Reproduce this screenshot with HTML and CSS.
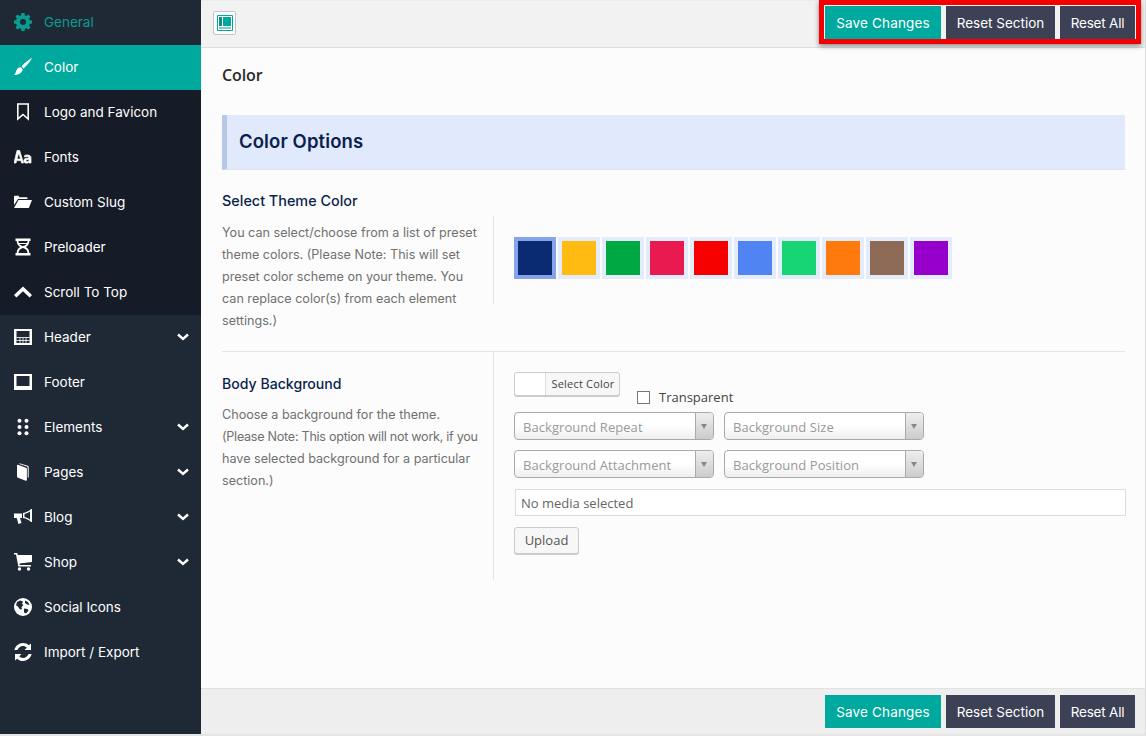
FILE: index.html
```html
<!DOCTYPE html>
<html lang="en">
<head>
    <meta charset="UTF-8">
    <title>Color</title>
    <link rel="stylesheet" href="styles.css">
</head>
<body>
    <div class="wrap">
        <nav class="sidebar">
            <a class="nav-item general"><svg class="ico" viewBox="0 0 18 18"><path fill-rule="evenodd" d="M7.5 0h3l.4 2.400 1.500.6 2-1.400 2.100 2.100-1.400 2 .6 1.500 2.300.4v3l-2.300.4-.6 1.500 1.400 2-2.100 2.100-2-1.400-1.500.6-.4 2.300h-3l-.4-2.300-1.500-.6-2 1.400-2.100-2.100 1.400-2-.6-1.500L0 10.500v-3l2.300-.4.6-1.500-1.400-2 2.100-2.100 2 1.400 1.500-.6zM9 6a3 3 0 1 0 0 6 3 3 0 0 0 0-6z"/></svg>General</a>
            <a class="nav-item active"><svg class="ico" viewBox="0 0 18 18"><path d="M18 0c-1 2.500-5 7.500-8.500 10.500L7.500 8.500C10.500 5 15.500 1 18 0zM6.800 9.300l1.900 1.900C8.400 14 5.500 17 0 17c1.800-1.300 1.600-3 2.500-5 .8-1.700 2.500-2.700 4.300-2.700z"/></svg>Color</a>
            <div class="nav-dark">
                <a class="nav-item"><svg class="ico" viewBox="0 0 18 18"><path fill="none" stroke="currentColor" stroke-width="1.600" d="M3.800 1h10.400v15L9 11.500 3.800 16z"/></svg>Logo and Favicon</a>
                <a class="nav-item"><svg class="ico" viewBox="0 0 18 18"><path stroke="currentColor" stroke-width=".7" d="M3 2.500h2.600L9.500 15H7.600l-.7-2.400H2.700L2 15H0zm-.1 8.500h3.700L4.800 5zM13 7c3 0 4 1 4 3.200V15h-2v-1c-.6.800-1.500 1.200-2.500 1.200-1.700 0-2.700-1-2.700-2.500 0-2 2-2.700 5-2.700 0-1-.5-1.500-1.700-1.500-.900 0-1.700.2-2.500.6V7.500C11.300 7.200 12 7 13 7zm2 4.400c-2 0-3 .3-3 1.200 0 .6.400 1 1.100 1 1 0 1.900-.6 1.900-1.300z"/></svg>Fonts</a>
                <a class="nav-item"><svg class="ico" viewBox="0 0 18 18"><path d="M0 4c0-.8.500-1.300 1.200-1.300h3.300l1 1.500h7c.7 0 1 .4 1 1V6H4L0 12zM4.500 7H18l-3.200 8H0z"/></svg>Custom Slug</a>
                <a class="nav-item"><svg class="ico" viewBox="0 0 18 18"><path fill-rule="evenodd" d="M1.500 .5h15v2.500h-1.200c0 3-1.500 5-3.500 6 2 1 3.500 3 3.500 6h1.200v2.500h-15V15h1.200c0-3 1.500-5 3.500-6-2-1-3.500-3-3.500-6H1.500zM4.500 3c0 1 .1 1.600.3 2h8.400c.2-.4.300-1 .3-2zM9 8c-1.700-.3-2.900-1-3.500-2h7c-.6 1-1.800 1.700-3.500 2zm0 2c-2.600.5-4.500 2.400-4.500 5h9c0-2.600-1.900-4.500-4.500-5z"/></svg>Preloader</a>
                <a class="nav-item"><svg class="ico" viewBox="0 0 18 18"><path d="M9 3.500l9 8.500-2.400 2.400L9 8.200l-6.600 6.200L0 12z"/></svg>Scroll To Top</a>
            </div>
            <a class="nav-item"><svg class="ico" viewBox="0 0 18 18"><path fill-rule="evenodd" d="M0 1h18v16H0zm2.500 2v12h13V3z"/><path fill="none" stroke="currentColor" stroke-width=".8" d="M2.500 9.500h13M6 9.500V15M9 9.500V15M12 9.500V15M2.500 12.500h13"/></svg>Header<svg class="chev" viewBox="0 0 12 8"><path fill="none" stroke="currentColor" stroke-width="2.400" d="M1 1.500l5 4.500 5-4.500"/></svg></a>
            <a class="nav-item"><svg class="ico" viewBox="0 0 18 18"><path fill-rule="evenodd" d="M0 1h18v16H0zm2.500 2v10h13V3z"/></svg>Footer</a>
            <a class="nav-item"><svg class="ico" viewBox="0 0 18 18"><circle cx="5.500" cy="2.800" r="2"/><circle cx="5.500" cy="9" r="2"/><circle cx="5.500" cy="15.200" r="2"/><circle cx="12.500" cy="9" r="2"/><circle cx="12.500" cy="2.800" r="2"/><circle cx="12.500" cy="15.200" r="2"/></svg>Elements<svg class="chev" viewBox="0 0 12 8"><path fill="none" stroke="currentColor" stroke-width="2.400" d="M1 1.500l5 4.500 5-4.500"/></svg></a>
            <a class="nav-item"><svg class="ico" viewBox="0 0 18 18"><path d="M3 2.500c0-.6.500-.9 1.100-.7l7.900 3c.6.200.9.700.9 1.300v10.900c0 .6-.5.900-1.100.7l-7.800-3c-.6-.2-1-.7-1-1.300z"/><path d="M5.500.3l8.300 2.500c.6.200.9.700.9 1.300v10.500h-1V5c0-.7-.3-1.100-.9-1.400L5.500 1z"/></svg>Pages<svg class="chev" viewBox="0 0 12 8"><path fill="none" stroke="currentColor" stroke-width="2.400" d="M1 1.500l5 4.500 5-4.500"/></svg></a>
            <a class="nav-item"><svg class="ico" viewBox="0 0 18 18"><path fill-rule="evenodd" d="M17 1h1v6c.5.500.5 2 0 2.500V14h-1c-2-2-5-3.500-8-4V5c3-.5 6-2 8-4zm-1 2.500c-1.600 1.200-3.500 2-5.500 2.500v3c2 .5 3.900 1.300 5.500 2.500zM0 5.500h8V10H6l1.500 5-3 1-1.800-6H0z"/></svg>Blog<svg class="chev" viewBox="0 0 12 8"><path fill="none" stroke="currentColor" stroke-width="2.400" d="M1 1.500l5 4.500 5-4.500"/></svg></a>
            <a class="nav-item"><svg class="ico" viewBox="0 0 18 18"><path d="M0 0h3.200l.6 2H18v7L5.500 10.500l.3 1.500H17v1.500H4.300L2 1.500H0z"/><circle cx="5.500" cy="16" r="1.700"/><circle cx="14.500" cy="16" r="1.700"/></svg>Shop<svg class="chev" viewBox="0 0 12 8"><path fill="none" stroke="currentColor" stroke-width="2.400" d="M1 1.500l5 4.500 5-4.500"/></svg></a>
            <a class="nav-item"><svg class="ico" viewBox="0 0 18 18"><circle cx="9" cy="9" r="9"/><path fill="#1f2936" d="M3 4l3-1.500 3 1-1 2.500 1.500 1L7.500 9 8 11l-2 .5L3.500 8 2 7.500zM11 2.500l3 1.500 1.500 3-2.500-.5L11 5zM10 10.500l3.500.5 1 1.500-2.500 3-2-1z"/></svg>Social Icons</a>
            <a class="nav-item"><svg class="ico" viewBox="0 0 18 18"><path d="M9 0c2.300 0 4.300.9 5.800 2.300L17 .5V7h-6.500l2.300-2.300C11.800 3.700 10.500 3 9 3 6.400 3 4.300 4.800 3.400 7H.4C1.300 3 4.800 0 9 0zM1 11h6.500l-2.300 2.300c1 1 2.300 1.700 3.800 1.700 2.600 0 4.700-1.800 5.600-4h3c-.9 4-4.400 7-8.600 7-2.300 0-4.300-.9-5.800-2.300L1 17.500z"/></svg>Import / Export</a>
        </nav>

        <main class="panel">
            <header class="bar top-bar">
                <button class="layout-btn"><svg viewBox="0 0 16 16" width="16" height="16"><path fill="none" stroke="#00a99d" d="M.5.500h15v15H.5z"/><path fill="#0b8f86" d="M2 2h3v9H2z"/><path fill="#00a99d" d="M6 2h8v9H6z"/><path fill="#0b8f86" d="M2 12.500h12v1H2z"/></svg></button>
                <div class="actions">
                    <button class="btn save">Save Changes</button>
                    <button class="btn reset-section">Reset Section</button>
                    <button class="btn reset-all">Reset All</button>
                </div>
                <div class="red-box"></div>
            </header>

            <section class="content">
                <h2 class="page-title">Color</h2>
                <h3 class="section-head">Color Options</h3>

                <div class="row row-first">
                    <div class="row-label">
                        <h4>Select Theme Color</h4>
                        <p>You can select/choose from a list of preset theme colors. (Please Note: This will set preset color scheme on your theme. You can replace color(s) from each element settings.)</p>
                    </div>
                    <div class="row-field swatches">
                        <span class="swatch selected c1"></span>
                        <span class="swatch c2"></span>
                        <span class="swatch c3"></span>
                        <span class="swatch c4"></span>
                        <span class="swatch c5"></span>
                        <span class="swatch c6"></span>
                        <span class="swatch c7"></span>
                        <span class="swatch c8"></span>
                        <span class="swatch c9"></span>
                        <span class="swatch c10"></span>
                    </div>
                </div>

                <div class="row row-second">
                    <div class="row-label">
                        <h4>Body Background</h4>
                        <p>Choose a background for the theme. <span class="tight">(Please Note: This option will not work, if you</span> have selected background for a particular section.)</p>
                    </div>
                    <div class="row-field">
                        <div class="color-line">
                            <button class="color-pick"><span class="chip"></span><span class="chip-text">Select Color</span></button>
                            <label class="transparent"><span class="check"></span>Transparent</label>
                        </div>
                        <div class="select-grid">
                            <div class="fake-select"><span>Background Repeat</span><i></i></div>
                            <div class="fake-select"><span>Background Size</span><i></i></div>
                            <div class="fake-select"><span>Background Attachment</span><i></i></div>
                            <div class="fake-select"><span>Background Position</span><i></i></div>
                        </div>
                        <input class="media" type="text" value="No media selected" readonly>
                        <button class="upload">Upload</button>
                    </div>
                </div>
            </section>

            <footer class="bar bottom-bar">
                <div class="actions">
                    <button class="btn save">Save Changes</button>
                    <button class="btn reset-section">Reset Section</button>
                    <button class="btn reset-all">Reset All</button>
                </div>
            </footer>
        </main>
    </div>
</body>
</html>
```

FILE: styles.css
```css
* {
    box-sizing: border-box;
}
html, body {
    height: 100%;
    overflow: hidden;
}
body {
    margin: 0;
    background-color: #e4e4e4;
    font-family: 'Open Sans', sans-serif;
    color: #555;
}
.wrap {
    display: flex;
    height: 734px;
}

/* sidebar */
.sidebar {
    width: 201px;
    flex: none;
    background-color: #1f2936;
    font-family: 'Inter', sans-serif;
    font-size: 13.500px;
}
.nav-dark {
    background-color: #161c27;
}
.nav-item {
    display: flex;
    align-items: center;
    height: 45px;
    padding: 0 12px 1px 14px;
    color: #fff;
}
.nav-item.active {
    background-color: #00a99d;
}
.nav-item.general {
    color: #0b9c91;
}
.ico {
    width: 18px;
    height: 18px;
    margin-right: 12px;
    fill: currentColor;
    flex: none;
}
.chev {
    width: 12px;
    height: 8px;
    margin-left: auto;
}

/* main panel */
.panel {
    flex: 1;
    display: flex;
    flex-direction: column;
    background-color: #fcfcfc;
    border-right: 1px solid #ddd;
    min-width: 0;
}
.bar {
    display: flex;
    align-items: center;
    flex: none;
    background-color: #f2f2f2;
}
.top-bar {
    position: relative;
    height: 48px;
    padding: 0 10px 3px 12px;
    border-bottom: 1px solid #ddd;
    border-top: 1px solid #ececec;
}
.bottom-bar {
    height: 46px;
    padding: 0 10px 0 12px;
    border-top: 1px solid #e2e2e2;
    background-color: #eeeeee;
}
.actions {
    display: flex;
    gap: 5px;
    margin-left: auto;
}
.btn {
    height: 33px;
    padding: 0;
    border: none;
    background-color: #3c4155;
    color: #fff;
    font-family: 'Inter', sans-serif;
    font-size: 13.500px;
}
.btn.save {
    width: 116px;
    letter-spacing: .15px;
    background-color: #00a99d;
}
.btn.reset-section {
    width: 109px;
}
.btn.reset-all {
    width: 75px;
    letter-spacing: -.2px;
}
.layout-btn {
    display: flex;
    align-items: center;
    justify-content: center;
    width: 23px;
    height: 24px;
    padding: 0;
    border: 1px solid #c4c4c4;
    border-radius: 2px;
    background-color: #fff;
}
.red-box {
    position: absolute;
    top: -1px;
    right: 4px;
    width: 322px;
    height: 44px;
    border: 5px solid #f50000;
    box-shadow: 0 2px 5px rgba(0, 0, 0, .45);
}

/* content */
.content {
    flex: 1;
    padding: 0 20px 0 21px;
    min-height: 0;
}
.page-title {
    margin: 16px 0 28px;
    height: 23px;
    font-size: 16px;
    line-height: 23px;
    font-weight: 600;
    letter-spacing: -.1px;
    color: #2b2b2b;
}
.section-head {
    margin: 0;
    height: 55px;
    padding-left: 12px;
    border-left: 5px solid #b5c9e6;
    border-bottom: 1px solid #e4e4e4;
    background-color: #e1eafc;
    font-family: 'Inter', sans-serif;
    font-size: 18.500px;
    font-weight: 600;
    line-height: 53px;
    letter-spacing: .1px;
    color: #0b1f4d;
}
.row {
    display: flex;
}
.row-first {
    padding-top: 21px;
    padding-bottom: 20px;
    border-bottom: 1px solid #e4e4e4;
}
.row-label {
    width: 272px;
    flex: none;
    padding-right: 12px;
    border-right: 1px solid #e4e4e4;
}
.row-first .row-label {
    height: 140px;
    border-right: none;
    position: relative;
}
.row-first .row-label::after {
    content: "";
    position: absolute;
    top: 25px;
    right: 0;
    height: 88px;
    border-right: 1px solid #e4e4e4;
}
.row-second .row-label {
    padding-top: 22px;
    height: 228px;
}
.row-label h4 {
    margin: 0 0 11px;
    font-family: 'Inter', sans-serif;
    font-size: 14.400px;
    line-height: 20px;
    font-weight: 500;
    color: #0b1f4d;
}
.row-second .row-label h4 {
    margin-bottom: 10px;
    font-size: 14.100px;
}
.row-label p {
    margin: 0;
    font-family: 'Inter', sans-serif;
    font-size: 12.600px;
    line-height: 22px;
    color: #707070;
}
.tight {
    letter-spacing: -.27px;
}
.row-field {
    flex: 1;
    padding-left: 20px;
}
.swatches {
    display: flex;
    gap: 2px;
    padding-top: 46px;
    align-items: flex-start;
}
.swatch {
    width: 42px;
    height: 42px;
    border: 4px solid #e4ebfb;
}
.swatch.selected {
    border-color: #86a4ec;
}
.c1 { background-color: #0a2a72; }
.c2 { background-color: #ffbb12; }
.c3 { background-color: #00a843; }
.c4 { background-color: #e91a50; }
.c5 { background-color: #f70000; }
.c6 { background-color: #5184f3; }
.c7 { background-color: #17d575; }
.c8 { background-color: #ff7a0d; }
.c9 { background-color: #8c6a55; }
.c10 { background-color: #9600cb; }

/* body background fields */
.row-second .row-field {
    padding-top: 20px;
}
.color-line {
    display: flex;
    align-items: flex-start;
    height: 40px;
}
.color-pick {
    display: flex;
    width: 106px;
    height: 24px;
    padding: 0;
    border: 1px solid #ccc;
    border-radius: 3px;
    background-color: #f7f7f7;
    box-shadow: 0 1px 0 #ccc;
    overflow: hidden;
    font-family: 'Open Sans', sans-serif;
}
.chip {
    width: 31px;
    height: 100%;
    background-color: #fff;
    border-right: 1px solid #ddd;
}
.chip-text {
    flex: 1;
    font-size: 11px;
    line-height: 22px;
    letter-spacing: .2px;
    color: #444;
    text-indent: 1px;
}
.transparent {
    display: flex;
    align-items: center;
    margin: 17px 0 0 17px;
    height: 16px;
    font-size: 13px;
    color: #444;
}
.check {
    width: 13px;
    height: 13px;
    margin-right: 9px;
    border: 1px solid #777;
    background-color: #fff;
}
.select-grid {
    display: grid;
    grid-template-columns: 200px 200px;
    gap: 10px;
}
.fake-select {
    display: flex;
    height: 28px;
    border: 1px solid #aaa;
    border-radius: 4px;
    background: linear-gradient(#fff 50%, #eee);
    font-size: 13px;
    line-height: 28px;
    letter-spacing: .06px;
    color: #999;
    overflow: hidden;
}
.fake-select span {
    flex: 1;
    padding-left: 8px;
}
.fake-select i {
    position: relative;
    width: 18px;
    border-left: 1px solid #aaa;
    background: linear-gradient(#eee, #ccc);
}
.fake-select i::after {
    content: "";
    position: absolute;
    top: 11px;
    left: 5px;
    border: 3.500px solid transparent;
    border-top: 5px solid #888;
}
.media {
    display: block;
    width: 611px;
    height: 27px;
    margin: 11px 0 11px 1px;
    padding: 0 5px;
    border: 1px solid #ddd;
    background-color: #fff;
    font-family: 'Open Sans', sans-serif;
    font-size: 13px;
    color: #666;
    outline: none;
}
.upload {
    display: block;
    width: 65px;
    height: 27px;
    padding: 0 0 2px;
    border: 1px solid #ccc;
    border-radius: 3px;
    background-color: #f7f7f7;
    box-shadow: 0 1px 0 #ccc;
    font-family: 'Open Sans', sans-serif;
    font-size: 13px;
    color: #555;
}
```
